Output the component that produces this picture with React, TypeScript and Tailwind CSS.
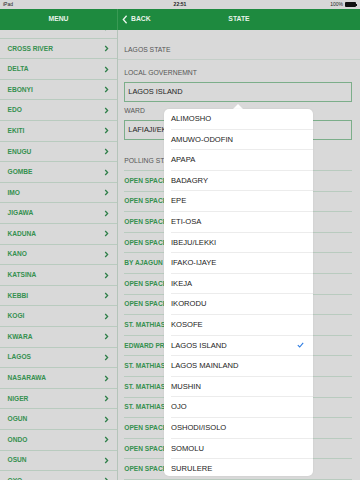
import React from 'react';

const states = [
  'BORNO', 'CROSS RIVER', 'DELTA', 'EBONYI', 'EDO', 'EKITI', 'ENUGU', 'GOMBE', 'IMO',
  'JIGAWA', 'KADUNA', 'KANO', 'KATSINA', 'KEBBI', 'KOGI', 'KWARA', 'LAGOS',
  'NASARAWA', 'NIGER', 'OGUN', 'ONDO', 'OSUN', 'OYO',
];

const lgas = [
  'ALIMOSHO', 'AMUWO-ODOFIN', 'APAPA', 'BADAGRY', 'EPE', 'ETI-OSA', 'IBEJU/LEKKI',
  'IFAKO-IJAYE', 'IKEJA', 'IKORODU', 'KOSOFE', 'LAGOS ISLAND', 'LAGOS MAINLAND',
  'MUSHIN', 'OJO', 'OSHODI/ISOLO', 'SOMOLU', 'SURULERE',
];

const units = [
  'OPEN SPACE AT OKE ARIN', 'OPEN SPACE AT IDUMAGBO', 'OPEN SPACE AT OJU OLOKUN', 'OPEN SPACE AT ITA FAJI',
  'BY AJAGUN STREET', 'OPEN SPACE AT OKEPOPO', 'OPEN SPACE AT ENU OWA', 'ST. MATHIAS SCHOOL I',
  'EDWARD PRIMARY SCHOOL', 'ST. MATHIAS SCHOOL II', 'ST. MATHIAS SCHOOL III', 'ST. MATHIAS SCHOOL IV',
  'OPEN SPACE AT OLUSHI', 'OPEN SPACE AT AROMIRE', 'OPEN SPACE AT IGA IDUNGANRAN',
];

function Chevron() {
  return (
    <svg width="5" height="7" viewBox="0 0 5 7" className="shrink-0">
      <path d="M1.2 1 L3.6 3.5 L1.2 6" fill="none" stroke="#2f7f49" strokeWidth="1.3" />
    </svg>
  );
}

export default function App() {
  return (
    <div className="w-[360px] h-[480px] overflow-hidden relative flex flex-col bg-[#d9d9d9] font-['Liberation_Sans',Arial,sans-serif]">
      {/* status bar */}
      <div className="h-[9px] shrink-0 flex items-center justify-between px-[3px] text-[5px] leading-[5px] text-[#222] bg-[#d7d7d7] relative">
        <span>iPad</span>
        <span className="absolute left-1/2 -translate-x-1/2 font-bold">22:51</span>
        <div className="flex items-center gap-[2px]">
          <span>100%</span>
          <div className="flex items-center">
            <div className="w-[11px] h-[4.5px] bg-[#111] rounded-[1px]" />
            <div className="w-[1px] h-[2px] bg-[#111]" />
          </div>
        </div>
      </div>

      {/* header */}
      <div className="h-[21px] shrink-0 flex bg-[#1e8a3f] text-[#e8f4ea] font-bold text-[6.8px]">
        <div className="w-[118px] border-r border-[#3a9a55] flex items-center justify-center">MENU</div>
        <div className="flex-1 flex items-center relative">
          <div className="flex items-center pl-[4px] gap-[3px]">
            <svg width="6" height="9" viewBox="0 0 6 9">
              <path d="M4.6 0.8 L1.3 4.5 L4.6 8.2" fill="none" stroke="#eef7f0" strokeWidth="1.3" />
            </svg>
            <span>BACK</span>
          </div>
          <span className="absolute left-1/2 -translate-x-1/2">STATE</span>
        </div>
      </div>

      {/* body */}
      <div className="flex-1 flex min-h-0">
        {/* states list */}
        <div className="w-[118px] shrink-0 border-r border-[#b5c4ba] overflow-hidden">
          <div className="-mt-[11.9px]">
            {states.map((s) => (
              <div
                key={s}
                className="h-[20.6px] border-b border-[#b9cbbf] flex items-center justify-between pl-[7.5px] pr-[8px] text-[6.6px] font-bold text-[#35904f]"
              >
                <span>{s}</span>
                <Chevron />
              </div>
            ))}
          </div>
        </div>

        {/* state detail */}
        <div className="flex-1 flex flex-col overflow-hidden">
          <div className="h-[30px] shrink-0 border-b border-[#c4cfc8] flex items-end pl-[6.3px] pb-[4px] text-[6.8px] leading-[10px] text-[#555]">
            LAGOS STATE
          </div>
          <div className="pl-[6.3px] pr-[8px] flex flex-col">
            <div className="mt-[8px] text-[6.8px] leading-[10px] text-[#555]">LOCAL GOVERNEMNT</div>
            <div className="mt-[4px] h-[20px] border border-[#7cae8a] flex items-center pl-[3px] text-[7.4px] text-[#222]">
              LAGOS ISLAND
            </div>
            <div className="mt-[4px] text-[6.8px] leading-[10px] text-[#555]">WARD</div>
            <div className="mt-[4px] h-[20px] border border-[#7cae8a] flex items-center pl-[3px] text-[7.4px] text-[#222]">
              LAFIAJI/EKO
            </div>
            <div className="mt-[15.7px] text-[6.8px] leading-[10px] text-[#555]">POLLING STATIONS</div>
            <div className="mt-[4.3px] border-t border-[#b9cbbf]">
              {units.map((u, i) => (
                <div
                  key={i}
                  className="h-[20.6px] border-b border-[#b9cbbf] flex items-center text-[6.6px] font-bold text-[#35904f] whitespace-nowrap"
                >
                  {u}
                </div>
              ))}
            </div>
          </div>
        </div>
      </div>

      {/* popover */}
      <div className="absolute left-[232px] top-[103.5px] w-0 h-0 border-l-[6px] border-r-[6px] border-b-[6px] border-l-transparent border-r-transparent border-b-white" />
      <div className="absolute left-[164px] top-[109px] w-[149px] h-[367px] bg-white rounded-[5px] overflow-hidden shadow-[0_0_2px_rgba(0,0,0,0.08)]">
        {lgas.map((l) => (
          <div key={l} className="h-[20.6px] pl-[7px] flex">
            <div className="flex-1 border-b border-[#ececec] flex items-center justify-between pr-[9px] text-[7.6px] text-[#222]">
              <span>{l}</span>
              {l === 'LAGOS ISLAND' && (
                <svg width="7" height="6" viewBox="0 0 7 6">
                  <path d="M0.8 3.2 L2.7 5 L6.2 0.8" fill="none" stroke="#2a7ae2" strokeWidth="1.1" />
                </svg>
              )}
            </div>
          </div>
        ))}
      </div>
    </div>
  );
}
